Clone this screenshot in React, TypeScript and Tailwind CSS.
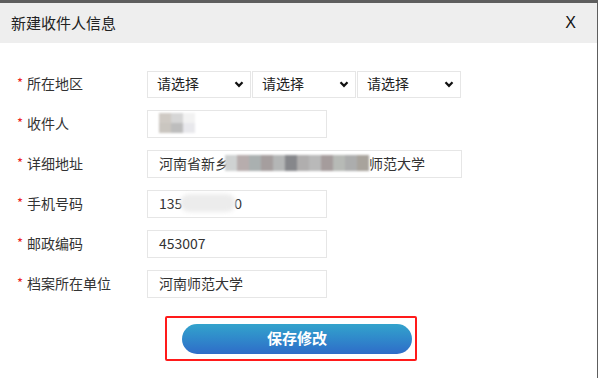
import React from 'react';

const FONT = { fontFamily: '"Microsoft YaHei", "Noto Sans CJK SC", "Liberation Sans", sans-serif' };

const Chevron = () => (
  <svg viewBox="0 0 10 10" className="h-[10px] w-[10px]" fill="none" stroke="#111" strokeWidth="2.2">
    <path d="M1.5 3.2 5 6.8 8.5 3.2" />
  </svg>
);

const SelectBox = () => (
  <div className="flex h-[27px] w-[104px] items-center justify-between border border-[#e6e6e6] bg-white pl-[9px] pr-[6px] text-[14px] leading-[24px] text-[#222]">
    <span className="-mt-[2px]">请选择</span>
    <Chevron />
  </div>
);

const Blur: React.FC<{ colors: string[] }> = ({ colors }) => (
  <span className="inline-flex h-[16px] blur-[1px]">
    {colors.map((c, i) => (
      <span key={i} className="h-full w-[12px]" style={{ background: c }} />
    ))}
  </span>
);

const Field: React.FC<{ label: string; children: React.ReactNode }> = ({ label, children }) => (
  <div className="flex h-[28px] items-center">
    <div className="-mt-[2px] flex w-[147px] items-center pl-[17px] text-[14px] text-[#333]">
      <span className="mr-[4px] text-[13px] text-[#e22]">*</span>
      {label}
    </div>
    {children}
  </div>
);

const Input: React.FC<{ w: string; children?: React.ReactNode }> = ({ w, children }) => (
  <div className={`flex h-[28px] ${w} items-center border border-[#e6e6e6] bg-white pb-[2px] pl-[11px] text-[14px] text-[#333]`}>
    {children}
  </div>
);

export default function App() {
  return (
    <div className="h-[378px] w-[598px] overflow-hidden bg-[#5e5e5e] pt-[3px] pr-[1px]" style={FONT}>
      <div className="flex h-full flex-col bg-white">
        <div className="flex h-[40px] items-center justify-between bg-[#eeeeee] pl-[11px] pr-[21px]">
          <span className="text-[15px] text-[#222]">新建收件人信息</span>
          <span className="text-[16px] text-[#111]" style={{ fontFamily: '"Liberation Sans", sans-serif' }}>X</span>
        </div>

        <div className="flex flex-col gap-[12px] pt-[27px]">
          <Field label="所在地区">
            <div className="flex gap-[1px]">
              <SelectBox />
              <SelectBox />
              <SelectBox />
            </div>
          </Field>
          <Field label="收件人">
            <Input w="w-[180px]">
              <span className="inline-flex flex-col blur-[1px]">
                <span className="flex">
                  <span className="h-[10px] w-[12px] bg-[#cfcac4]" />
                  <span className="h-[10px] w-[12px] bg-[#d6d6d6]" />
                  <span className="h-[10px] w-[12px] bg-[#f2f2f2]" />
                </span>
                <span className="flex">
                  <span className="h-[10px] w-[12px] bg-[#cac6c0]" />
                  <span className="h-[10px] w-[12px] bg-[#bdbdbd]" />
                  <span className="h-[10px] w-[12px] bg-[#e8e8ec]" />
                </span>
              </span>
            </Input>
          </Field>
          <Field label="详细地址">
            <Input w="w-[315px]">
              <span>河南省新乡</span>
              <span className="-ml-[4px] inline-flex">
                <Blur colors={['#cfd2d2', '#b7adad', '#aab0b0', '#a59e9e', '#b4b6b6', '#86878b', '#b0aeae', '#b9b9b9', '#a59c9c', '#b7bab6', '#acadad', '#a8a39c']} />
              </span>
              <span>师范大学</span>
            </Input>
          </Field>
          <Field label="手机号码">
            <Input w="w-[180px]">
              <span>135</span>
              <span className="mx-[-2px] inline-flex h-[18px] w-[56px] rounded-full bg-[#ececec] blur-[2px]" />
              <span>0</span>
            </Input>
          </Field>
          <Field label="邮政编码">
            <Input w="w-[180px]">453007</Input>
          </Field>
          <Field label="档案所在单位">
            <Input w="w-[180px]">河南师范大学</Input>
          </Field>
        </div>

        <div className="mt-[18px] ml-[165px] w-[252px] rounded-[2px] border-2 border-[#ff1a1a] pt-[6px] pb-[5px] pl-[15px] pr-[3px]">
          <button className="flex h-[30px] w-[230px] items-center justify-center rounded-full bg-gradient-to-b from-[#33a3cc] to-[#2f6cc8] pb-[2px] text-[15px] font-bold text-white">
            保存修改
          </button>
        </div>
      </div>
    </div>
  );
}
